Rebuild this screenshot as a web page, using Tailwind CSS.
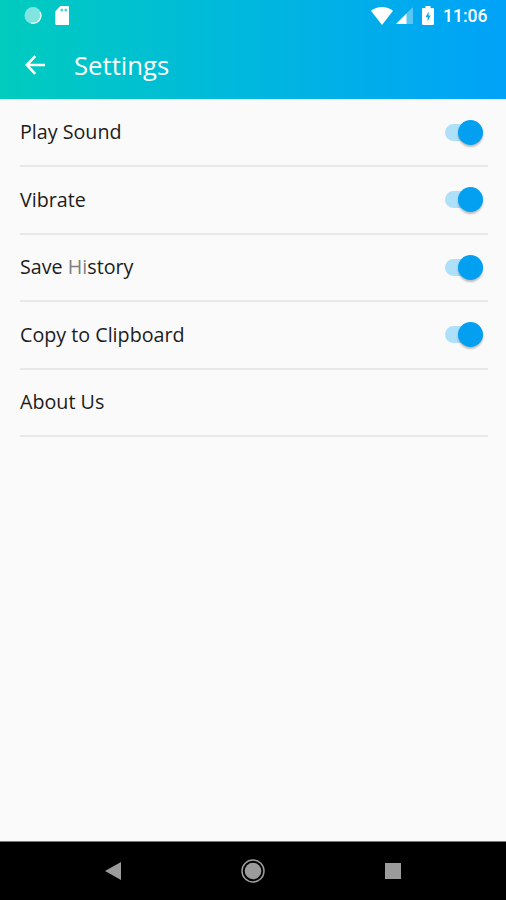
<!DOCTYPE html>
<html lang="en">
<head>
    <meta charset="UTF-8">
    <meta name="viewport" content="width=device-width, initial-scale=1.0">
    <title>Settings</title>
    <script src="https://cdn.jsdelivr.net/npm/@tailwindcss/browser@4"></script>
</head>
<body class="flex flex-col h-screen overflow-hidden bg-[#fafafa] font-['Open_Sans','Noto_Sans',sans-serif] text-[#1c1c1c]">
    <header class="h-[99px] shrink-0 bg-linear-to-r/srgb from-[#00ccbe] via-[#00b9dc] via-45% to-[#00a2f8] text-white">
        <!-- Status bar -->
        <div class="flex items-center h-[31px] pl-[23.5px] pr-[19px]">
            <svg class="w-[18px] h-[18px]" viewBox="0 0 18 18">
                <circle cx="9" cy="8.500" r="8.500" fill="#fff" fill-opacity=".5"/>
                <path d="M16 5A7.800 7.800 0 0 1 7 16" fill="none" stroke="#fff" stroke-opacity=".75" stroke-width="1.500"/>
            </svg>
            <svg class="w-[14.500px] h-[19px] ml-[13px]" viewBox="0 0 14 19">
                <path d="M5 0h7.500a1.500 1.500 0 0 1 1.500 1.500v16a1.500 1.500 0 0 1-1.500 1.500h-11a1.500 1.500 0 0 1-1.500-1.500V5.500z" fill="#fff"/>
                <path d="M5.300 2.800h2.400v2.700H5.300zM9.300 2.800h2.400v2.700H9.300z" fill="#10c4cc" fill-opacity=".75"/>
            </svg>
            <div class="flex items-center ml-auto">
                <svg class="w-[22px] h-[18px]" viewBox="0 0 22 18">
                    <path d="M0 3.800C3 1.400 6.800 0 11 0s8 1.400 11 3.800L11 18z" fill="#fff"/>
                </svg>
                <svg class="w-[17px] h-[17px] ml-[3px]" viewBox="0 0 17 17">
                    <path d="M0 17L17 0v17z" fill="#fff" fill-opacity=".35"/>
                    <path d="M0 17L10.500 6.500V17z" fill="#fff"/>
                </svg>
                <svg class="w-[12px] h-[19px] ml-[9px]" viewBox="0 0 12 19">
                    <path d="M3.500 0h5v2h2.300A1.200 1.200 0 0 1 12 3.200v14.600a1.200 1.200 0 0 1-1.200 1.200H1.200A1.200 1.200 0 0 1 0 17.800V3.200A1.200 1.200 0 0 1 1.200 2h2.300z" fill="#fff"/>
                    <path d="M6.600 5.500L3.600 11h2v4.500L8.600 9.600H6.600z" fill="#07a9ee"/>
                </svg>
                <span class="w-[44px] ml-[9px] pt-0.5 font-[Roboto] font-medium text-[17.500px] leading-none whitespace-nowrap">11:06</span>
            </div>
        </div>
        <!-- Toolbar -->
        <div class="flex items-center h-[67px] pl-[25px]">
            <svg class="w-5 h-5" viewBox="0 0 20 20" fill="none" stroke="#fff" stroke-width="2.600">
                <path d="M10.200 1.200L1.900 10l8.300 8.800M1.900 10H20"/>
            </svg>
            <h1 class="ml-[29px] pt-0.5 text-[25.700px] leading-none">Settings</h1>
        </div>
    </header>

    <main class="flex-1 pt-[0.5px] pl-5 pr-[18.500px] text-[19.700px]">
        <div class="flex items-center justify-between h-[67.500px] pr-[5px] border-b-2 border-[#e8e8e8]">
            <span>Play Sound</span>
            <span class="flex items-center justify-end w-[38px] h-[17px] rounded-full bg-[#aee0f9]">
                <span class="w-[25px] h-[25px] rounded-full bg-[#03a0f2] shadow-[0_2px_2px_rgba(0,0,0,0.25)]"></span>
            </span>
        </div>
        <div class="flex items-center justify-between h-[67.500px] pr-[5px] border-b-2 border-[#e8e8e8]">
            <span>Vibrate</span>
            <span class="flex items-center justify-end w-[38px] h-[17px] rounded-full bg-[#aee0f9]">
                <span class="w-[25px] h-[25px] rounded-full bg-[#03a0f2] shadow-[0_2px_2px_rgba(0,0,0,0.25)]"></span>
            </span>
        </div>
        <div class="flex items-center justify-between h-[67.500px] pr-[5px] border-b-2 border-[#e8e8e8]">
            <span>Save <span class="text-[#808080]">Hi</span>story</span>
            <span class="flex items-center justify-end w-[38px] h-[17px] rounded-full bg-[#aee0f9]">
                <span class="w-[25px] h-[25px] rounded-full bg-[#03a0f2] shadow-[0_2px_2px_rgba(0,0,0,0.25)]"></span>
            </span>
        </div>
        <div class="flex items-center justify-between h-[67.500px] pr-[5px] border-b-2 border-[#e8e8e8]">
            <span>Copy to Clipboard</span>
            <span class="flex items-center justify-end w-[38px] h-[17px] rounded-full bg-[#aee0f9]">
                <span class="w-[25px] h-[25px] rounded-full bg-[#03a0f2] shadow-[0_2px_2px_rgba(0,0,0,0.25)]"></span>
            </span>
        </div>
        <div class="flex items-center h-[67.500px] border-b-2 border-[#e8e8e8]">
            <span>About Us</span>
        </div>
    </main>

    <!-- Navigation bar -->
    <nav class="flex items-center h-[59px] shrink-0 pl-[105px] bg-black border-t border-[#777]">
        <svg class="w-4 h-[18px]" viewBox="0 0 16 18">
            <path d="M16 0v18L0 9z" fill="#9b9b9b"/>
        </svg>
        <svg class="w-6 h-6 ml-[120px]" viewBox="0 0 24 24">
            <circle cx="12" cy="12" r="11" fill="none" stroke="#9b9b9b" stroke-width="1.500"/>
            <circle cx="12" cy="12" r="8.300" fill="#9b9b9b"/>
        </svg>
        <div class="w-4 h-4 ml-[120px] bg-[#9b9b9b]"></div>
    </nav>
</body>
</html>
